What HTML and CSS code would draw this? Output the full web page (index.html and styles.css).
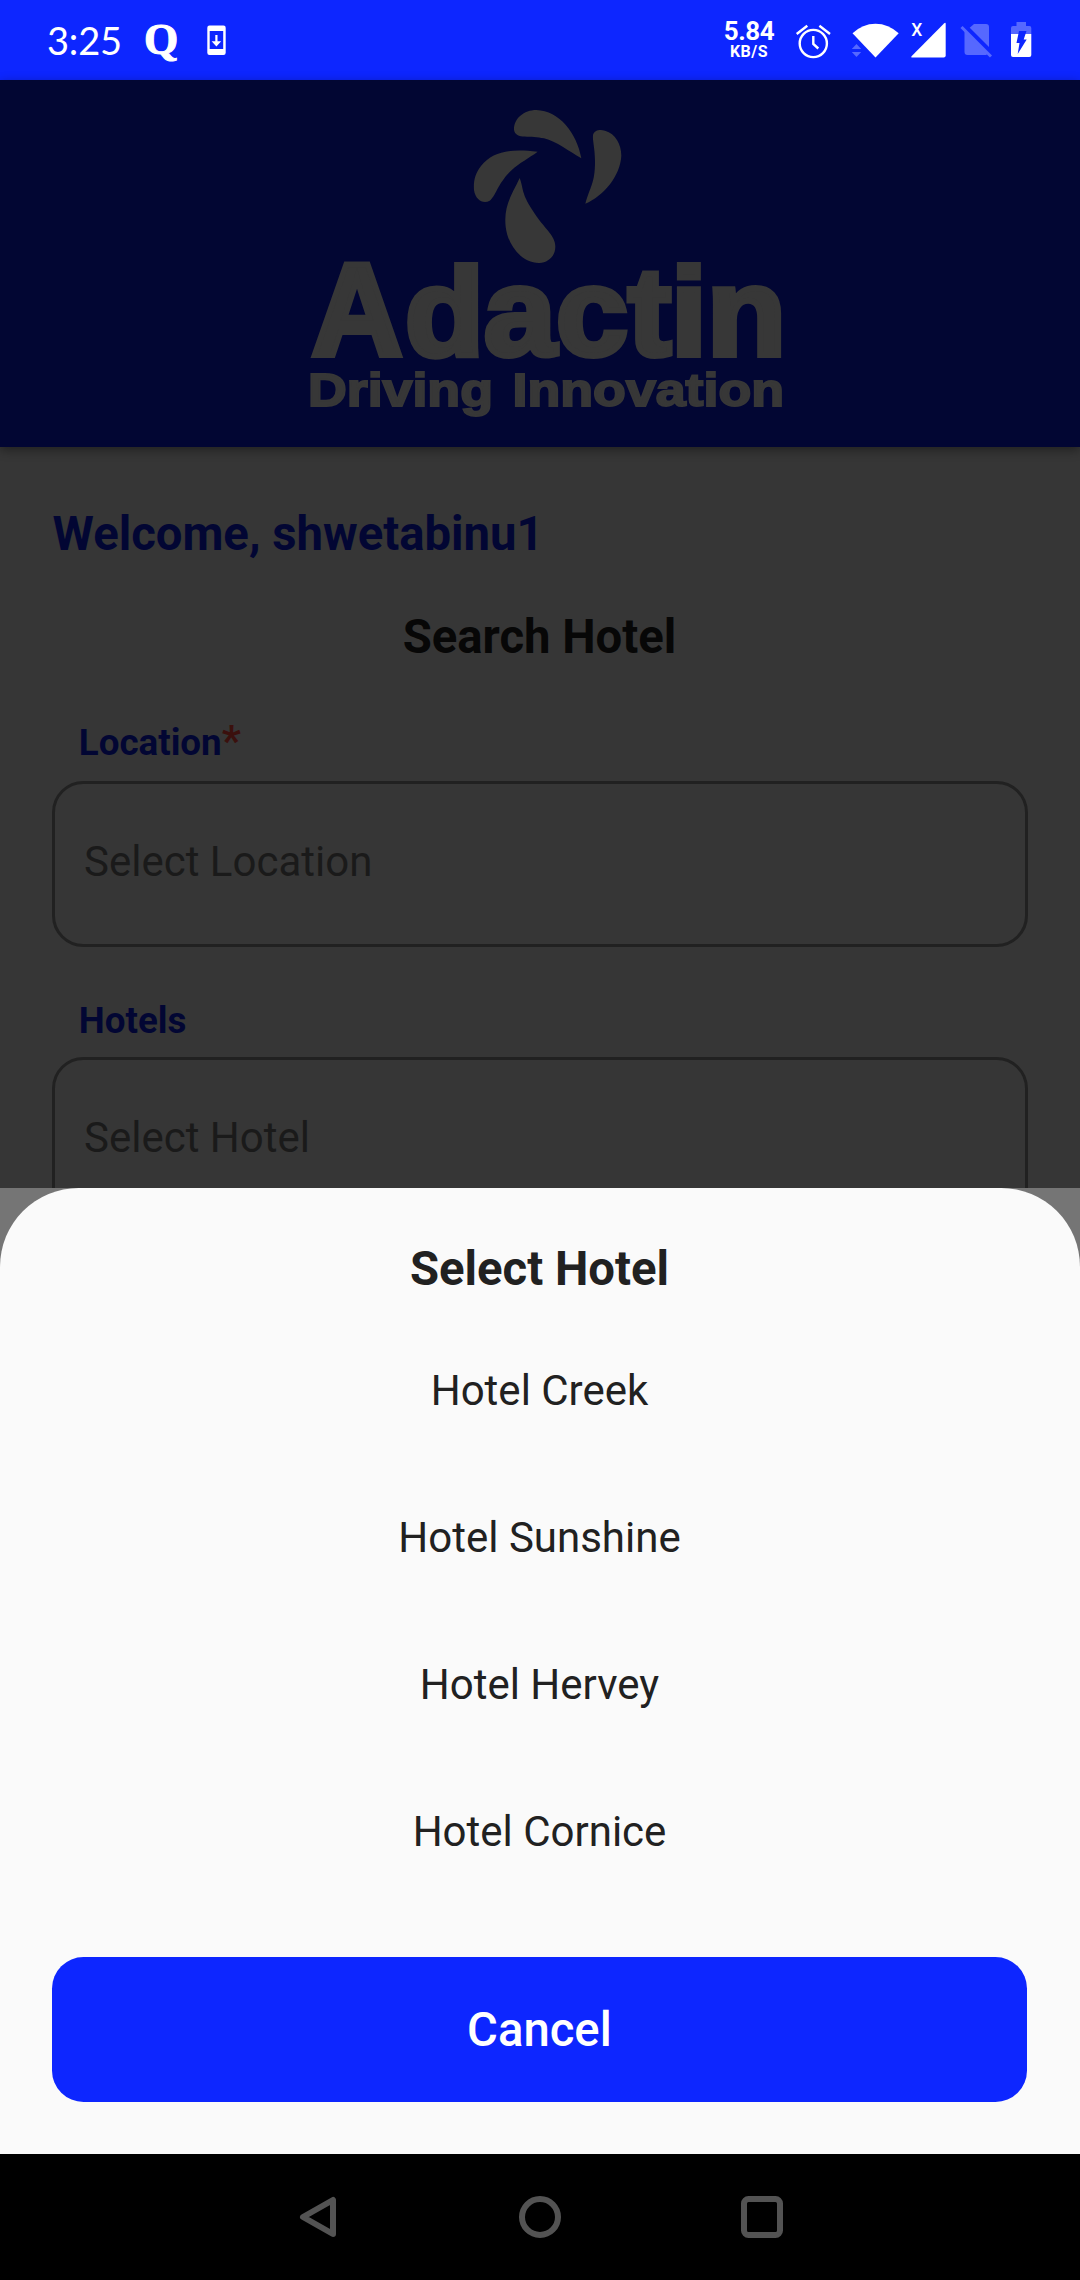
FILE: index.html
```html
<!DOCTYPE html>
<html lang="en">
<head>
<meta charset="utf-8">
<title>Search Hotel</title>
<link rel="stylesheet" href="styles.css">
</head>
<body>
<div class="status">
  <span class="clock">3:25</span>
  <span class="quora">Q</span>
  <svg class="download" width="20" height="80" viewBox="206 0 20 80"><path fill="#fff" fill-rule="evenodd" d="M209.500 25.500h14q2.200 0 2.200 2.200v25q0 2.200-2.200 2.200h-14q-2.200 0-2.200-2.200v-25q0-2.200 2.200-2.200zM209.700 31v18h13.500V31z"/><path fill="#fff" d="M215.300 35h2.200v6.300h3.700l-4.800 5.200-4.800-5.200h3.700z"/></svg>
  <div class="spacer"></div>
  <div class="speed"><span class="rate">5.84</span><span class="unit">KB/S</span></div>
  <svg class="alarm" width="36" height="80" viewBox="795 0 36 80"><g fill="none" stroke="#fff" stroke-width="2.400"><circle cx="813.300" cy="43.500" r="13.600"/><path d="M813.300 36v8l5 4.500M796.700 34l10.600-8.300M830 34l-10.600-8.300"/></g></svg>
  <svg class="wifi" width="48" height="80" viewBox="851 0 48 80"><path fill="#fff" d="M852.500 33.300Q862.500 23.700 875.500 23.700T898.700 33.300L875.500 57.500z"/><path fill="#5668ff" d="M851.800 49l4.700-5 4.700 5zM851.800 52h9.400l-4.700 5z"/></svg>
  <svg class="signal" width="36" height="80" viewBox="910 0 36 80"><path fill="#fff" d="M944 23.500q1.700-1.500 1.700.5v31.500q0 2-2 2H912q-1.500 0-.5-1.300z"/><text class="nosig" x="911.300" y="36">X</text></svg>
  <svg class="sim" width="32" height="80" viewBox="960 0 32 80"><path fill="#5668ff" d="M964.500 31v21q0 3 3 3h18.500l3-2V27q0-3-3-3H974l-4 3.500z"/><path stroke="#0d26ff" stroke-width="5" d="M963 24.500l28 28"/><path stroke="#5668ff" stroke-width="3" d="M961.500 27l29.500 29.500"/></svg>
  <svg class="battery" width="22" height="80" viewBox="1010 0 22 80"><path fill="#5668ff" d="M1011 34v-6q0-2 2-2h3.500v-4h9.500v4h3.500q1.800 0 1.800 2v6z"/><path fill="#fff" d="M1011 34h20.300v21q0 2-2 2H1013q-2 0-2-2z"/><path fill="#0d26ff" d="M1019 31h7.500l-2.800 8.500h3l-9 14.500 1.800-11h-3z"/></svg>
</div>
<header class="brand">
  <svg width="500" height="367" viewBox="290 80 500 367" fill="#373737">
    <g transform="translate(290 90) scale(.33333)">
      <path d="M874 205C861 130 808 62 739 60C702 60 671 86 672 119C676 150 724 135 762 145C800 154 836 184 874 205z"/>
      <path d="M743 185C660 176 610 183 573 228C555 250 550 275 552 300C556 330 580 343 599 332C617 319 623 280 663 242C690 217 716 205 743 185z"/>
      <path d="M886 341C900 290 915 280 915 215C915 175 907 150 909 135C913 120 930 118 945 122C977 131 994 163 994 197C991 258 941 318 886 341z"/>
      <path d="M689 264C668 310 640 345 647 410C653 465 695 520 748 519C776 518 796 497 796 470C796 435 764 419 727 360C693 307 701 296 689 264z"/>
    </g>
    <text class="name"><tspan class="initial" x="311.500" y="355" textLength="91" lengthAdjust="spacingAndGlyphs">A</tspan><tspan x="405" y="355" textLength="381" lengthAdjust="spacingAndGlyphs">dactin</tspan></text>
    <text class="tagline" x="308" y="406" textLength="476" lengthAdjust="spacingAndGlyphs">Driving Innovation</text>
  </svg>
</header>
<main class="page">
  <h2 class="welcome">Welcome, shwetabinu1</h2>
  <h1 class="heading">Search Hotel</h1>
  <div class="label">Location<span class="required">*</span></div>
  <div class="field">Select Location</div>
  <div class="label hotels">Hotels</div>
  <div class="field cut">Select Hotel</div>
</main>
<div class="backing">
<section class="sheet">
  <h2 class="sheet-title">Select Hotel</h2>
  <ul class="options">
    <li>Hotel Creek</li>
    <li>Hotel Sunshine</li>
    <li>Hotel Hervey</li>
    <li>Hotel Cornice</li>
  </ul>
  <button class="cancel">Cancel</button>
</section>
</div>
<nav class="nav">
  <svg width="42" height="44" viewBox="-2 0 42 44"><path d="M33 5v34L3 22z"/></svg>
  <svg width="44" height="44" viewBox="0 0 44 44"><circle cx="22" cy="22" r="18"/></svg>
  <svg width="44" height="44" viewBox="0 0 44 44"><rect x="4" y="4" width="36" height="36" rx="4.500"/></svg>
</nav>
</body>
</html>
```

FILE: styles.css
```css
* { box-sizing: border-box; }
body {
  margin: 0;
  width: 1080px;
  height: 2280px;
  display: flex;
  flex-direction: column;
  overflow: hidden;
  font-family: Roboto, sans-serif;
  background: #363636;
}
svg { display: block; flex: none; }
h1, h2, ul { margin: 0; padding: 0; }

.status {
  height: 80px;
  flex: none;
  display: flex;
  align-items: center;
  padding: 0 48px 0 47px;
  background: #0d26ff;
  color: #fff;
}
.clock { width: 97px; font: 400 38px/80px Lato, sans-serif; letter-spacing: -0.2px; }
.quora { width: 34px; font: 700 44px/76px "Liberation Serif", serif; -webkit-text-stroke: 1px #fff; }
.download { margin-left: 28px; }
.spacer { flex: 1; }
.speed { width: 50px; display: flex; flex-direction: column; align-items: center; font-weight: 700; padding-bottom: 1px; }
.rate { font-size: 26px; line-height: 24px; letter-spacing: -0.5px; }
.unit { font-size: 16px; line-height: 17px; letter-spacing: 0.5px; }
.alarm { margin-left: 21px; }
.wifi { margin-left: 20px; }
.signal { margin-left: 11px; }
.sim { margin-left: 14px; }
.battery { margin-left: 18px; }
.nosig { fill: #fff; font: 500 17.500px Roboto, sans-serif; }

.brand {
  height: 367px;
  flex: none;
  display: flex;
  justify-content: center;
  background: #020633;
  box-shadow: 0 3px 10px rgba(0, 0, 0, 0.4);
  position: relative;
}
.name { font: 700 124px "Liberation Sans", sans-serif; stroke: #373737; stroke-width: 6; }
.initial { font-size: 131px; }
.tagline { font: 700 46px "Liberation Sans", sans-serif; word-spacing: 4px; stroke: #373737; stroke-width: 2; }

.page {
  height: 741px;
  flex: none;
  padding: 57px 52.500px 0;
  overflow: hidden;
}
.welcome, .heading { font-size: 47.250px; line-height: 60px; font-weight: 700; }
.welcome { color: #020633; }
.heading { margin: 43px 1px 0 0; text-align: center; color: #070707; }
.label {
  height: 50px;
  margin-top: 51px;
  padding-left: 26.250px;
  font-size: 36.750px;
  line-height: 50px;
  font-weight: 700;
  color: #020633;
}
.required { font-size: 42px; line-height: 1; font-weight: 700; color: #3b100d; }
.field {
  height: 166px;
  margin: 13px 0 0 -0.500px;
  padding: 0 0 6px 29px;
  border: 3px solid #212121;
  border-radius: 31.500px;
  display: flex;
  align-items: center;
  font-size: 42px;
  color: #1a1a1a;
}
.hotels { margin-top: 49px; }
.cut { margin-top: 11px; }

.backing { height: 966px; flex: none; background: #757575; }
.sheet {
  height: 966px;
  padding: 51px 53px 0 52px;
  border-radius: 78.750px 78.750px 0 0;
  background: #fafafa;
  color: #212121;
  text-align: center;
}
.sheet-title { font-size: 47.250px; line-height: 60px; font-weight: 700; }
.options { list-style: none; margin: 0 0 52px; padding-top: 18px; }
.options li { height: 147px; font-size: 42px; line-height: 147px; }
.cancel {
  display: block;
  width: 975px;
  height: 144.500px;
  margin-left: 0.400px;
  padding: 1px 1px 0 0;
  border: 0;
  border-radius: 31.500px;
  background: #0d26ff;
  color: #fff;
  font: 500 47.250px Roboto, sans-serif;
}

.nav {
  height: 126px;
  flex: none;
  display: flex;
  align-items: center;
  justify-content: center;
  gap: 178px;
  padding-left: 2px;
  background: #000;
}
.nav path, .nav circle, .nav rect { fill: none; stroke: #535353; stroke-width: 6; stroke-linejoin: round; }
```
